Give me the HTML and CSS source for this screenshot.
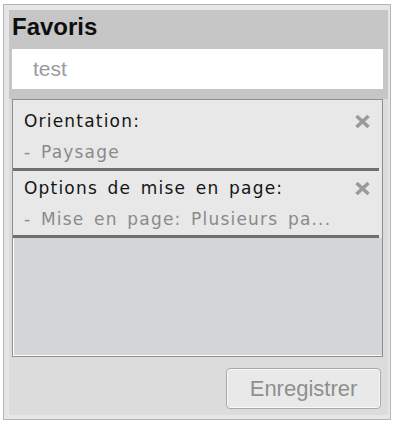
FILE: index.html
```html
<!DOCTYPE html>
<html lang="fr">
<head>
    <meta charset="UTF-8">
    <meta name="viewport" content="width=device-width, initial-scale=1.0">
    <title>Favoris</title>
    <link rel="stylesheet" href="styles.css">
</head>
<body>
    <div class="panel">
        <div class="head">
            <h1 class="title">Favoris</h1>
            <input type="text" class="name-field" value="test">
        </div>

        <div class="body">
            <div class="fav-list">
                <div class="fav-item">
                    <div class="fav-row">
                        <div class="fav-text">
                            <div class="fav-label">Orientation:</div>
                            <div class="fav-value">- Paysage</div>
                        </div>
                        <svg class="fav-remove" viewBox="0 0 16 15"><path d="M2 2 L14 13 M14 2 L2 13"/></svg>
                    </div>
                    <div class="fav-rule"></div>
                </div>

                <div class="fav-item">
                    <div class="fav-row">
                        <div class="fav-text">
                            <div class="fav-label">Options de mise en page:</div>
                            <div class="fav-value">- Mise en page: Plusieurs pa...</div>
                        </div>
                        <svg class="fav-remove" viewBox="0 0 16 15"><path d="M2 2 L14 13 M14 2 L2 13"/></svg>
                    </div>
                    <div class="fav-rule"></div>
                </div>
            </div>

            <div class="actions">
                <button type="button" class="save-btn">Enregistrer</button>
            </div>
        </div>
    </div>
</body>
</html>
```

FILE: styles.css
```css
body {
    margin: 4px 0 0 3px;
    background: #fff;
}

.panel {
    box-sizing: border-box;
    width: 388px;
    height: 416px;
    border: 1px solid #b4b4b4;
    background: #e6e6e6;
    padding: 5px 2px 4px 5px;
    display: flex;
    flex-direction: column;
}

.head {
    background: #c6c6c6;
    padding: 0 5px 10px 3px;
}

.title {
    margin: 0;
    padding-bottom: 5px;
    font: bold 24px/34px "Liberation Sans", Arial, sans-serif;
    color: #0e0e0e;
}

.name-field {
    display: block;
    width: 100%;
    height: 40px;
    box-sizing: border-box;
    border: 0;
    margin: 0;
    padding: 0 0 0 21px;
    background: #fff;
    font: 21px "Liberation Sans", Arial, sans-serif;
    color: #9a9a9a;
    outline: none;
}

.body {
    flex: 1;
    background: #dcdcdc;
    padding: 0 5px 6px 3px;
    display: flex;
    flex-direction: column;
}

.fav-list {
    height: 258px;
    box-sizing: border-box;
    border: 1px solid #8f8f8f;
    background: #d4d5d7;
    box-shadow: inset 1px -1px 0 #fff;
}

.fav-item {
    background: #e8e8e8;
    padding-top: 2px;
}

.fav-item:first-child {
    padding-top: 6px;
}

.fav-row {
    display: flex;
    align-items: flex-start;
    padding: 0 11px;
}

.fav-text {
    flex: 1;
    font: 17px/31px "DejaVu Sans", sans-serif;
    letter-spacing: 1.2px;
    word-spacing: 3px;
}

.fav-label {
    color: #151515;
}

.fav-value {
    color: #8a8a8a;
    white-space: nowrap;
}

.fav-remove {
    width: 17px;
    height: 15px;
    margin-top: 8px;
    fill: none;
    stroke: #9a9a9a;
    stroke-width: 3.6;
}

.fav-rule {
    height: 3px;
    margin-right: 3px;
    background: #6f6f6f;
}

.actions {
    display: flex;
    justify-content: flex-end;
    padding: 11px 2px 0 0;
}

.save-btn {
    width: 155px;
    height: 41px;
    border: 1px solid #a9a9a9;
    border-radius: 4px;
    background: #e9e9e9;
    box-shadow: inset 0 0 0 1px #f8f8f8;
    font: 22px "Liberation Sans", Arial, sans-serif;
    color: #8f8f8f;
    padding: 0;
}
```
